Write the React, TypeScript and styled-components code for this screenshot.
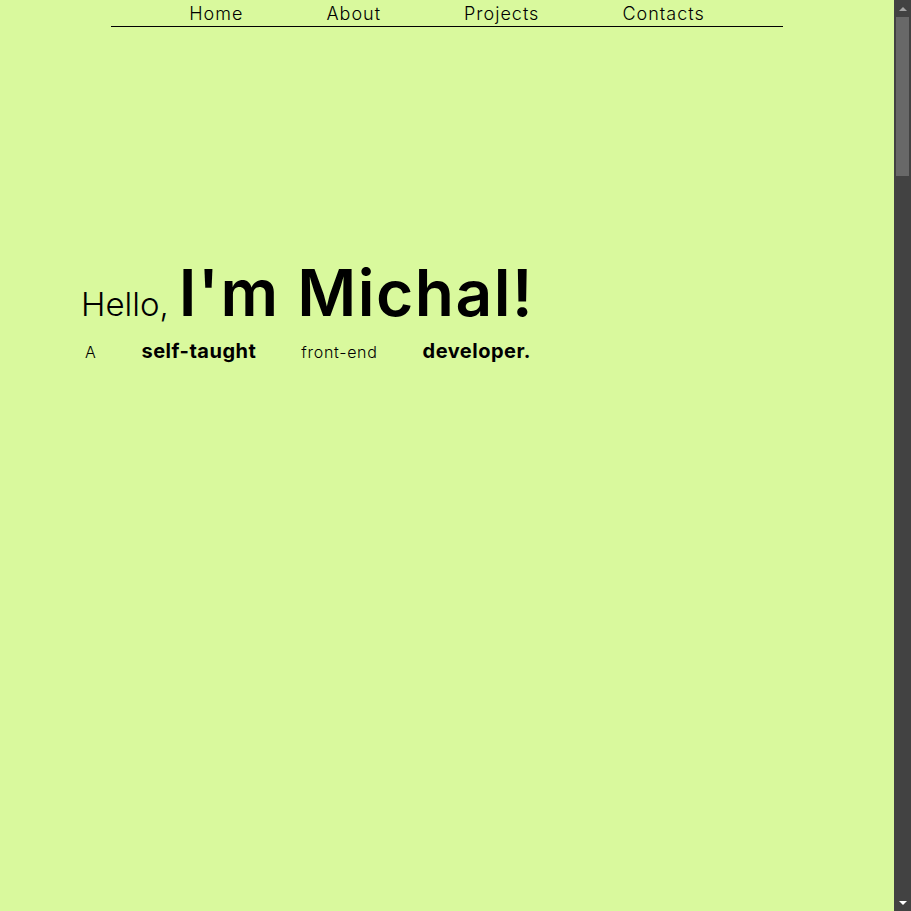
import styled, { createGlobalStyle } from "styled-components";

const GlobalStyle = createGlobalStyle`
  html, body {
    margin: 0;
    height: 100%;
    overflow: hidden;
  }
  body {
    background-color: #d9f99d;
    color: #000;
    font-family: "Inter", "Liberation Sans", sans-serif;
  }
`;

const Viewport = styled.div`
  display: flex;
  height: 100vh;
  background-color: #d9f99d;
`;

const Main = styled.main`
  flex: 1;
  min-width: 0;
  overflow: hidden;
`;

const ScrollTrack = styled.div`
  display: flex;
  flex-direction: column;
  align-items: center;
  width: 17px;
  flex-shrink: 0;
  background-color: #424242;
`;

const Arrow = styled.div<{ $down?: boolean }>`
  display: flex;
  align-items: center;
  justify-content: center;
  height: 17px;
  width: 17px;
  margin-top: ${(p) => (p.$down ? "auto" : "0")};

  &::before {
    content: "";
    width: 0;
    height: 0;
    border-left: 4px solid transparent;
    border-right: 4px solid transparent;
    ${(p) =>
      p.$down
        ? "border-top: 4px solid #ffffff;"
        : "border-bottom: 4px solid #a3a3a3;"}
  }
`;

const Thumb = styled.div`
  width: 13px;
  height: 159px;
  background-color: #686868;
`;

const Page = styled.div`
  min-height: 5057px;
`;

const Nav = styled.nav`
  max-width: 672px;
  margin: 0 auto;
  border-bottom: 1px solid #000;
`;

const NavList = styled.ul`
  display: flex;
  justify-content: center;
  gap: 83px;
  list-style: none;
  margin: 0;
  padding: 0;
  height: 26px;
`;

const NavItem = styled.li`
  font-size: 18px;
  font-weight: 300;
  line-height: 27px;
  letter-spacing: 1px;
`;

const Hero = styled.section`
  padding: 227px 0 0 81px;
`;

const Greeting = styled.h1`
  display: flex;
  align-items: baseline;
  gap: 10px;
  margin: 0;
  font-weight: 300;
`;

const Hello = styled.span`
  font-size: 33px;
  font-weight: 300;
`;

const Name = styled.span`
  font-size: 64px;
  font-weight: 600;
  letter-spacing: 1.5px;
`;

const Tagline = styled.p`
  display: flex;
  align-items: baseline;
  gap: 45px;
  margin: 8px 0 0 4px;
`;

const Word = styled.span<{ $bold?: boolean }>`
  font-size: ${(p) => (p.$bold ? "20px" : "16px")};
  font-weight: ${(p) => (p.$bold ? 700 : 300)};
  letter-spacing: ${(p) => (p.$bold ? "0.5px" : "0.7px")};
`;

function App() {
  return (
    <Viewport>
      <GlobalStyle />
      <Main>
        <Page>
          <Nav>
            <NavList>
              <NavItem>Home</NavItem>
              <NavItem>About</NavItem>
              <NavItem>Projects</NavItem>
              <NavItem>Contacts</NavItem>
            </NavList>
          </Nav>
          <Hero>
            <Greeting>
              <Hello>Hello,</Hello>
              <Name>I'm Michal!</Name>
            </Greeting>
            <Tagline>
              <Word>A</Word>
              <Word $bold>self-taught</Word>
              <Word>front-end</Word>
              <Word $bold>developer.</Word>
            </Tagline>
          </Hero>
        </Page>
      </Main>
      <ScrollTrack>
        <Arrow />
        <Thumb />
        <Arrow $down />
      </ScrollTrack>
    </Viewport>
  );
}

export default App;
